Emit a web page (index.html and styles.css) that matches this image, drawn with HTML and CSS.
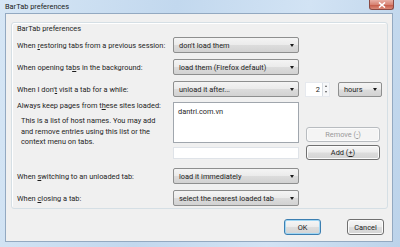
FILE: index.html
```html
<!DOCTYPE html>
<html lang="en">

<head>
    <meta charset="UTF-8">
    <title>BarTab preferences</title>
    <link rel="stylesheet" href="styles.css">
</head>

<body>
    <div class="window">
        <div class="titlebar">
            <span class="title">BarTab preferences</span>
            <span class="close">
                <svg width="8" height="6" viewBox="0 0 8 6">
                    <path d="M1 0.5 L7 5.5 M7 0.5 L1 5.5" stroke="#fff" stroke-width="1.6" />
                </svg>
            </span>
        </div>

        <div class="client">
            <div class="groupbox">
                <div class="caption">BarTab preferences</div>

                <div class="row first">
                    <div class="lbl">When <u>r</u>estoring tabs from a previous session:</div>
                    <div class="menu">don't load them<span class="arrow"></span></div>
                </div>

                <div class="row">
                    <div class="lbl">When opening ta<u>b</u>s in the background:</div>
                    <div class="menu">load them (Firefox default)<span class="arrow"></span></div>
                </div>

                <div class="row">
                    <div class="lbl">When I don'<u>t</u> visit a tab for a while:</div>
                    <div class="menu">unload it after...<span class="arrow"></span></div>
                    <div class="spin">
                        <span class="num">2</span>
                        <span class="spinbtns">
                            <span class="up"></span>
                            <span class="down"></span>
                        </span>
                    </div>
                    <div class="menu small">hours<span class="arrow"></span></div>
                </div>

                <div class="sites">
                    <div class="lblcol">
                        <div class="lbl">Always keep pages from t<u>h</u>ese sites loaded:</div>
                        <p class="desc">This is a list of host names. You may add and remove entries using this list or the context menu on tabs.</p>
                    </div>
                    <div class="listcol">
                        <div class="listbox">dantri.com.vn</div>
                        <div class="textbox"></div>
                    </div>
                    <div class="btncol">
                        <div class="button disabled">Remove (<u>-</u>)</div>
                        <div class="button">Add (<u>+</u>)</div>
                    </div>
                </div>

                <div class="row after-sites">
                    <div class="lbl">When <u>s</u>witching to an unloaded tab:</div>
                    <div class="menu">load it immediately<span class="arrow"></span></div>
                </div>

                <div class="row">
                    <div class="lbl">When <u>c</u>losing a tab:</div>
                    <div class="menu">select the nearest loaded tab<span class="arrow"></span></div>
                </div>
            </div>

            <div class="footer">
                <div class="button default">OK</div>
                <div class="button">Cancel</div>
            </div>
        </div>
    </div>
</body>

</html>
```

FILE: styles.css
```css
body {
    margin: 0;
    font-family: Roboto, "Liberation Sans", sans-serif;
    font-size: 7.4px;
    color: #1e1e1e;
    background-color: #c4d9ee;
}

u {
    text-decoration: underline;
    text-underline-offset: 1px;
}

.window {
    width: 400px;
    height: 247px;
    box-sizing: border-box;
    display: flex;
    flex-direction: column;
    background: linear-gradient(100deg, #d6e6f5 0%, #c2d8ee 40%, #d2e3f4 70%, #bcd3ea 100%);
}

.titlebar {
    height: 13px;
    display: flex;
    align-items: flex-start;
    padding: 0 6px 0 5px;
}

.title {
    line-height: 13px;
    color: #1a1a1a;
}

.close {
    margin-left: auto;
    width: 25px;
    height: 10px;
    display: flex;
    align-items: center;
    justify-content: center;
    border: 1px solid #8a4a44;
    border-top: none;
    border-radius: 0 0 3px 3px;
    box-sizing: border-box;
    background: linear-gradient(#e8b0a6 0%, #d88474 50%, #c45a48 55%, #db8a78 100%);
}

.client {
    flex: 1;
    margin: 0 7px 5px 5px;
    border: 1px solid #93a9c1;
    background-color: #f0f0f0;
    display: flex;
    flex-direction: column;
}

.groupbox {
    margin: 8px 4px 0 5px;
    padding: 0 5px 2px 5px;
    border: 1px solid #d5dfe5;
    border-radius: 3px;
    box-shadow: inset 1px 1px 0 #fff;
}

.caption {
    height: 10px;
    line-height: 10px;
    margin-top: 1px;
}

.row {
    display: flex;
    align-items: center;
    height: 16px;
    margin-top: 6px;
}

.row.first {
    margin-top: 3px;
}

.row.after-sites {
    margin-top: 8px;
}

.lbl {
    width: 156px;
    flex-shrink: 0;
    white-space: nowrap;
}

.menu {
    width: 126px;
    height: 16px;
    box-sizing: border-box;
    display: flex;
    align-items: center;
    padding-left: 5px;
    border: 1px solid #8e8f8f;
    border-radius: 2px;
    background: linear-gradient(#f4f4f4 0%, #ebebeb 48%, #dcdcdc 52%, #d2d2d2 100%);
    white-space: nowrap;
}

.menu.small {
    width: 44px;
    height: 15px;
    margin-left: 8px;
}

.arrow {
    margin-left: auto;
    margin-right: 4px;
    width: 0;
    height: 0;
    border-left: 2.5px solid transparent;
    border-right: 2.5px solid transparent;
    border-top: 3px solid #1a1a1a;
}

.spin {
    width: 25px;
    height: 15px;
    margin-left: 6px;
    box-sizing: border-box;
    display: flex;
    align-items: center;
    background-color: #fff;
    border: 1px solid #e6e9ee;
}

.num {
    margin-left: auto;
    margin-right: 2px;
}

.spinbtns {
    width: 6px;
    height: 13px;
    display: flex;
    flex-direction: column;
    justify-content: space-around;
    align-items: center;
    border-left: 1px solid #d8dde3;
    background-color: #f6f7f9;
}

.up,
.down {
    width: 0;
    height: 0;
    border-left: 1.5px solid transparent;
    border-right: 1.5px solid transparent;
}

.up {
    border-bottom: 2px solid #555;
}

.down {
    border-top: 2px solid #555;
}

.sites {
    display: flex;
    margin-top: 5px;
    height: 58px;
}

.lblcol {
    width: 156px;
    flex-shrink: 0;
}

.lblcol .lbl {
    line-height: 10px;
    margin-top: -1px;
}

.desc {
    margin: 5px 0 0 4px;
    width: 148px;
    line-height: 10.5px;
}

.listcol {
    width: 126px;
    display: flex;
    flex-direction: column;
}

.listbox {
    height: 41px;
    box-sizing: border-box;
    border: 1px solid #a0a6ad;
    background-color: #fff;
    padding: 4px 4px;
    line-height: 9px;
}

.textbox {
    height: 12px;
    margin-top: 4px;
    box-sizing: border-box;
    border: 1px solid #dfe3e8;
    background-color: #fff;
}

.btncol {
    width: 74px;
    margin-left: 7px;
    display: flex;
    flex-direction: column;
    justify-content: flex-end;
    gap: 3px;
}

.button {
    height: 15px;
    box-sizing: border-box;
    display: flex;
    align-items: center;
    justify-content: center;
    border: 1px solid #707070;
    border-radius: 3px;
    background: linear-gradient(#f6f6f6 0%, #ececec 48%, #dddddd 52%, #d4d4d4 100%);
    box-shadow: inset 0 0 0 1px #fbfbfb;
}

.button.disabled {
    color: #9a9a9a;
    border-color: #b8bcc0;
    background: #f4f4f4;
}

.footer {
    display: flex;
    justify-content: flex-end;
    gap: 26px;
    margin: 10px 8px 0 0;
}

.footer .button {
    width: 37px;
    height: 16px;
}

.button.default {
    border-color: #3c7fb1;
    box-shadow: inset 0 0 0 1px #9fd6f4;
}
```
